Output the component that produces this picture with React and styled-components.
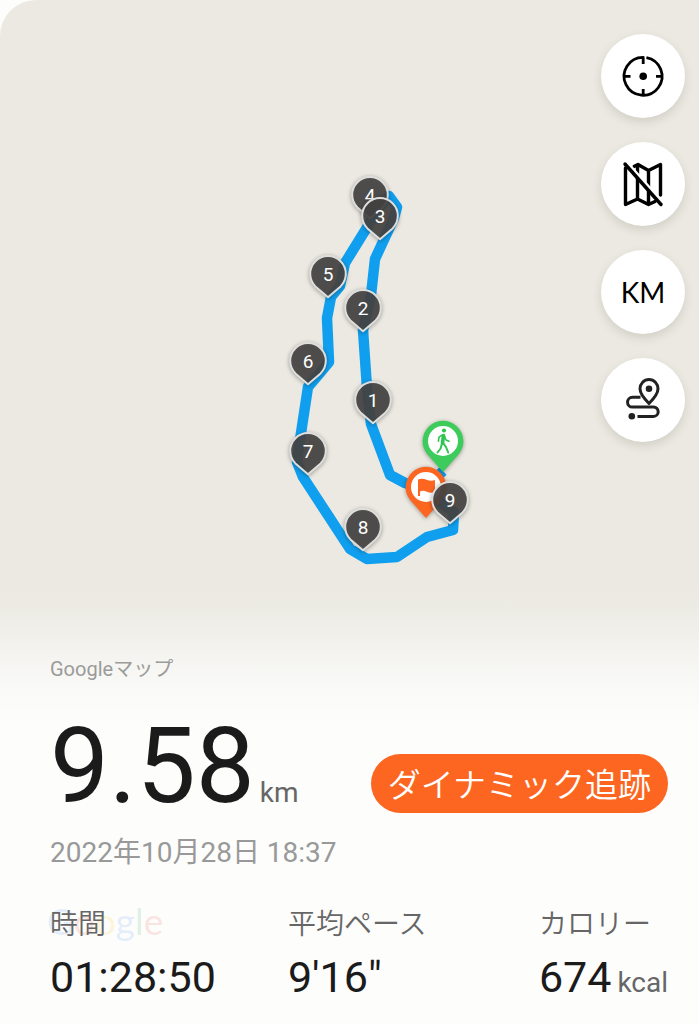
import React from "react";
import styled, { createGlobalStyle } from "styled-components";

const GlobalStyle = createGlobalStyle`
  *, *::before, *::after { box-sizing: border-box; }
  body {
    margin: 0;
    background: #fdfdfc;
    font-family: Roboto, "Noto Sans CJK JP", sans-serif;
  }
`;

const Screen = styled.main`
  display: flex;
  flex-direction: column;
  min-height: 100vh;
  overflow: hidden;
  border-top-left-radius: 36px;
  background: #ebe9e1;
`;

const MapArea = styled.section`
  position: relative;
`;

const RouteMap = styled.svg`
  display: block;
  width: 100%;
  height: auto;
`;

const PinShape = styled.path`
  filter: drop-shadow(0 1px 2px rgba(0, 0, 0, 0.35));
`;

const PinNumber = styled.text`
  fill: #fff;
  font-size: 19px;
  text-anchor: middle;
`;

const MapControls = styled.div`
  position: absolute;
  top: 34px;
  right: 14px;
  display: flex;
  flex-direction: column;
  gap: 24px;
`;

const RoundButton = styled.button`
  display: grid;
  place-items: center;
  width: 84px;
  height: 84px;
  padding: 0;
  border: 0;
  border-radius: 50%;
  background: #fff;
  color: #000;
  font-family: Lato, sans-serif;
  font-size: 28px;
  line-height: 36px;
  box-shadow: 0 4px 10px rgba(80, 75, 60, 0.16);
  cursor: pointer;
`;

const ControlIcon = styled.svg`
  width: 84px;
  height: 84px;
  fill: none;
  stroke: currentColor;
  stroke-width: 3;
  stroke-linejoin: round;
`;

const Summary = styled.section`
  flex: 1;
  padding: 76px 31px 22px 50px;
  background: linear-gradient(
    #ebe9e1 0,
    #ecebe4 28px,
    #f3f2ee 66px,
    #f9f9f7 106px,
    #fdfdfc 144px
  );
`;

const MapSource = styled.p`
  margin: 0;
  color: #9b9b99;
  font-size: 20px;
  line-height: 26px;
`;

const DistanceRow = styled.div`
  display: flex;
  justify-content: space-between;
  align-items: flex-end;
  margin-top: 29px;
`;

const Distance = styled.h1`
  display: flex;
  align-items: baseline;
  gap: 5px;
  margin: 0;
  color: #1b1b1b;
  font-size: 105px;
  font-weight: 400;
  line-height: 112px;
`;

const Unit = styled.span`
  color: #666;
  font-size: 28px;
  line-height: 36px;
`;

const TrackButton = styled.button`
  height: 59px;
  margin: 0 0 10px;
  padding: 0 17px 2px;
  border: 0;
  border-radius: 30px;
  background: #fc6621;
  color: #fff;
  font-family: "Noto Sans CJK JP", sans-serif;
  font-size: 33px;
  font-weight: 350;
  line-height: 52px;
  white-space: nowrap;
  cursor: pointer;
`;

const Timestamp = styled.time`
  display: block;
  margin-top: 12px;
  color: #999;
  font-size: 28px;
  line-height: 36px;
`;

const Stats = styled.dl`
  position: relative;
  display: grid;
  grid-template-columns: 238fr 251fr 129fr;
  margin: 36px 0 0;
`;

const Stat = styled.div`
  position: relative;
  white-space: nowrap;
`;

const StatLabel = styled.dt`
  color: #666;
  font-size: 28px;
  font-weight: 350;
  line-height: 36px;
`;

const StatValue = styled.dd`
  display: flex;
  align-items: baseline;
  gap: 6px;
  margin: 8px 0 0;
  color: #1b1b1b;
  font-size: 43px;
  line-height: 52px;
`;

const Watermark = styled.span`
  position: absolute;
  top: -6px;
  left: -3px;
  font-family: Lato, sans-serif;
  font-size: 37px;
  line-height: 40px;
  font-weight: 400;
  opacity: 0.13;
`;

const Letter = styled.span`
  color: ${(p) => p.$color};
`;

const kilometres = [
  { n: 4, x: 370, y: 195 },
  { n: 3, x: 380, y: 216 },
  { n: 5, x: 328, y: 274 },
  { n: 2, x: 363, y: 308 },
  { n: 6, x: 308, y: 361 },
  { n: 1, x: 373, y: 400 },
  { n: 7, x: 308, y: 451 },
  { n: 8, x: 363, y: 527 },
  { n: 9, x: 450, y: 500 },
];

const logoLetters = [
  ["G", "#4285f4"],
  ["o", "#ea4335"],
  ["o", "#fbbc05"],
  ["g", "#4285f4"],
  ["l", "#34a853"],
  ["e", "#ea4335"],
];

function KilometrePin({ n, x, y }) {
  return (
    <g transform={`translate(${x} ${y})`}>
      <PinShape
        d="M0 23.2 L-12.6 12.4 A17.8 17.8 0 1 1 12.6 12.4 Z"
        fill="#454341"
        fillOpacity="0.9"
        stroke="#dededc"
        strokeWidth="2"
        strokeLinejoin="round"
      />
      <PinNumber y="7">{n}</PinNumber>
    </g>
  );
}

function EndPin({ x, y, color, children }) {
  return (
    <g transform={`translate(${x} ${y})`}>
      <PinShape d="M0 31 L-15.5 13.5 A20.4 20.4 0 1 1 15.5 13.5 Z" fill={color} />
      <circle r="15" fill="#fff" />
      {children}
    </g>
  );
}

function Route() {
  return (
    <RouteMap viewBox="0 0 699 580" role="img" aria-label="Route">
      <path
        d="M443 471 L424 489 L405 483 L390 475 L371 424 L367 388 L363 330 L371 295 L375 259 L394 218 L397 207 L389 196 L379 208 L345 263 L340 286 L331 297 L327 318 L329 362 L308 387 L301 433 L297 462 L303 477 L350 549 L367 559 L397 557 L427 537 L453 530 L454 512 L430 496"
        fill="none"
        stroke="#109fee"
        strokeWidth="10.5"
        strokeLinejoin="round"
      />
      <EndPin x={443} y={441} color="#3dcc5c">
        <g fill="none" stroke="#2fc452" strokeLinecap="round" strokeLinejoin="round">
          <circle cx="1" cy="-10.5" r="2.1" fill="#2fc452" stroke="none" />
          <path d="M0.5 -5.5 L-0.5 2" strokeWidth="3.6" />
          <path d="M-0.5 -6.2 L-4 -3.8 L-4.6 0.2 M1.5 -5 L3 -1 L6 0.2" strokeWidth="1.6" />
          <path d="M-1.2 3 L-2.4 7.5 L-5.5 11.5 M0.6 2.6 L3 6 L5.2 11.5" strokeWidth="2" />
        </g>
      </EndPin>
      <EndPin x={426} y={487} color="#fc6621">
        <path
          d="M-8 9 V-7.5 Q-4 -9 0.5 -7.3 T9 -7 V4.8 Q5 6.5 1 4.8 T-6 4.5 V9 Z"
          fill="#fc6621"
        />
      </EndPin>
      {kilometres.map((k) => (
        <KilometrePin key={k.n} {...k} />
      ))}
    </RouteMap>
  );
}

function LocateIcon() {
  return (
    <ControlIcon viewBox="0 0 84 84" aria-hidden="true">
      <path
        d="M45.4 23.6 A19 19 0 1 1 42.2 23.3 V30 M42.2 61 V55 M23.4 42.3 H29.5 M61 42.3 H55"
        strokeWidth="2.8"
      />
      <circle cx="42.2" cy="42.3" r="3.8" fill="currentColor" stroke="none" />
    </ControlIcon>
  );
}

function MapOffIcon() {
  return (
    <ControlIcon viewBox="0 0 84 84" strokeLinecap="round" aria-hidden="true">
      <g strokeWidth="3.4">
        <path d="M24.5 26 V62.5 L36.5 57 L47.5 62.5 L54 59.5 M33 24.5 L37 22.5 L47.5 28.5 L59.5 22.5 V53 M36.5 23 V57 M47.5 28.5 V62.5" />
        <path d="M26.5 21 L63 62" stroke="#fff" strokeWidth="3" strokeLinecap="butt" />
        <path d="M24 22 L60 62.5" />
      </g>
    </ControlIcon>
  );
}

function RouteIcon() {
  return (
    <ControlIcon viewBox="0 0 84 84" color="#222" aria-hidden="true">
      <path d="M48 45.5 C44 41.5 39 36 39 30.8 A9 9.3 0 0 1 57 30.8 C57 36 52 41.5 48 45.5 Z" />
      <path d="M39.5 39.3 H31.4 A4.8 4.8 0 0 0 31.4 49 H52.5 A4.7 4.7 0 0 1 52.5 58.4 H36.5" />
      <circle cx="48" cy="30.8" r="3.3" fill="currentColor" stroke="none" />
      <circle cx="30.8" cy="58.3" r="3.3" fill="currentColor" stroke="none" />
    </ControlIcon>
  );
}

export default function App() {
  return (
    <>
      <GlobalStyle />
      <Screen>
        <MapArea>
          <Route />
          <MapControls>
            <RoundButton aria-label="Locate"><LocateIcon /></RoundButton>
            <RoundButton aria-label="Hide map"><MapOffIcon /></RoundButton>
            <RoundButton>KM</RoundButton>
            <RoundButton aria-label="Route"><RouteIcon /></RoundButton>
          </MapControls>
        </MapArea>
        <Summary>
          <MapSource>Googleマップ</MapSource>
          <DistanceRow>
            <Distance>
              9.58<Unit>km</Unit>
            </Distance>
            <TrackButton>ダイナミック追跡</TrackButton>
          </DistanceRow>
          <Timestamp dateTime="2022-10-28T18:37">2022年10月28日 18:37</Timestamp>
          <Stats>
            <Watermark aria-hidden="true">
              {logoLetters.map(([char, color], i) => (
                <Letter key={i} $color={color}>{char}</Letter>
              ))}
            </Watermark>
            <Stat>
              <StatLabel>時間</StatLabel>
              <StatValue>01:28:50</StatValue>
            </Stat>
            <Stat>
              <StatLabel>平均ペース</StatLabel>
              <StatValue>9'16"</StatValue>
            </Stat>
            <Stat>
              <StatLabel>カロリー</StatLabel>
              <StatValue>
                674<Unit>kcal</Unit>
              </StatValue>
            </Stat>
          </Stats>
        </Summary>
      </Screen>
    </>
  );
}
